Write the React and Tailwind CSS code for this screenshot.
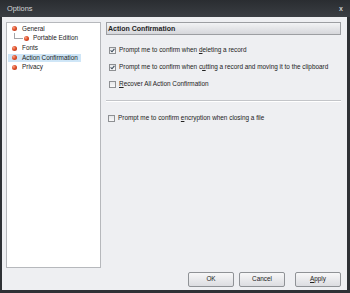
import React from 'react';

const font = { fontFamily: '"Liberation Sans", Arial, sans-serif' };

function Bullet() {
  return (
    <span className="block w-[5px] h-[5px] rounded-full shrink-0 bg-[radial-gradient(circle_at_35%_35%,#f7a58a_0%,#e0502a_45%,#a52a12_100%)]" />
  );
}

function Check({ checked }) {
  return (
    <span className="w-[7px] h-[7px] shrink-0 border border-[#8e9093] bg-gradient-to-b from-[#e6e7e9] to-[#f8f8f9] flex items-center justify-center">
      {checked && (
        <svg width="5" height="5" viewBox="0 0 5 5">
          <path d="M0.6 2.4 L2 3.8 L4.4 0.8" fill="none" stroke="#3d4c5c" strokeWidth="1.1" />
        </svg>
      )}
    </span>
  );
}

function Option({ checked, children, className = '' }) {
  return (
    <label className={`flex items-center gap-[3px] h-[8px] text-[6.4px] text-[#222] ${className}`}>
      <Check checked={checked} />
      <span className="leading-none whitespace-nowrap">{children}</span>
    </label>
  );
}

function Button({ children }) {
  return (
    <button className="w-[46px] h-[15px] border border-[#8f9296] rounded-[2px] bg-gradient-to-b from-[#f7f7f8] to-[#dcdde1] text-[6.4px] text-[#222] leading-none flex items-center justify-center">
      {children}
    </button>
  );
}

export default function App() {
  return (
    <div style={font} className="w-[350px] h-[293px] bg-[#2e3135] flex flex-col overflow-hidden">
      {/* title bar */}
      <div className="h-[17px] shrink-0 flex items-center justify-between pl-[7px] pr-[7px] bg-gradient-to-b from-[#2a2d31] to-[#3a3e43]">
        <span className="text-[7.4px] text-[#d6d7d9] leading-none">Options</span>
        <span className="text-[7px] font-bold text-[#c9cacc] leading-none">x</span>
      </div>

      {/* body */}
      <div className="flex-1 ml-[2px] mr-[3px] mb-[3px] bg-[#eeeff2] flex flex-col pl-[4px] pr-[6px] pt-[5px] pb-[3px]">
        <div className="flex flex-1 gap-[5px]">
          {/* tree */}
          <div className="w-[95px] h-[246px] bg-white border border-[#b6b8bc] pt-[1px] pl-[1px]">
            <div className="h-[9.7px] flex items-center pl-[4px] gap-[5px] text-[6.4px] text-[#222]">
              <Bullet />
              <span className="leading-none">General</span>
            </div>
            <div className="h-[9.7px] flex items-center pl-[6px] text-[6.4px] text-[#222]">
              <span className="w-[9px] h-[6px] border-l border-b border-[#a3a5a9] self-start mt-[-1px] shrink-0" />
              <span className="ml-[1px]"><Bullet /></span>
              <span className="leading-none ml-[4px]">Portable Edition</span>
            </div>
            <div className="h-[9.7px] flex items-center pl-[4px] gap-[5px] text-[6.4px] text-[#222]">
              <Bullet />
              <span className="leading-none">Fonts</span>
            </div>
            <div className="h-[9.7px] flex items-center">
              <div className="h-[8px] w-[73px] bg-[#cfe6f7] flex items-center pl-[4px] gap-[5px] text-[6.4px] text-[#222]">
                <Bullet />
                <span className="leading-none whitespace-nowrap">Action Confirmation</span>
              </div>
            </div>
            <div className="h-[9.7px] flex items-center pl-[4px] gap-[5px] text-[6.4px] text-[#222]">
              <Bullet />
              <span className="leading-none">Privacy</span>
            </div>
          </div>

          {/* content */}
          <div className="flex-1 flex flex-col">
            <div className="h-[13px] border border-[#9c9ea2] bg-gradient-to-b from-[#f2f3f5] to-[#d6d7db] flex items-center pl-[1px]">
              <span className="text-[7px] font-bold text-[#1f1f1f] leading-none">Action Confirmation</span>
            </div>
            <div className="pl-[3px] pt-[11px] flex flex-col gap-[9px]">
              <Option checked>Prompt me to confirm when <u>d</u>eleting a record</Option>
              <Option checked>Prompt me to confirm when c<u>u</u>tting a record and moving it to the clipboard</Option>
              <Option><u>R</u>ecover All Action Confirmation</Option>
            </div>
            <div className="mt-[12px] h-px bg-[#c3c5c9] border-b border-white box-content" />
            <div className="pl-[2px] pt-[12px]">
              <Option>Prompt me to confirm <u>e</u>ncryption when closing a file</Option>
            </div>
          </div>
        </div>

        {/* buttons */}
        <div className="flex justify-end gap-[5px] mt-[4px]">
          <Button>OK</Button>
          <Button>Cancel</Button>
          <span className="ml-[5px]"><Button><u>A</u>pply</Button></span>
        </div>
      </div>
    </div>
  );
}
